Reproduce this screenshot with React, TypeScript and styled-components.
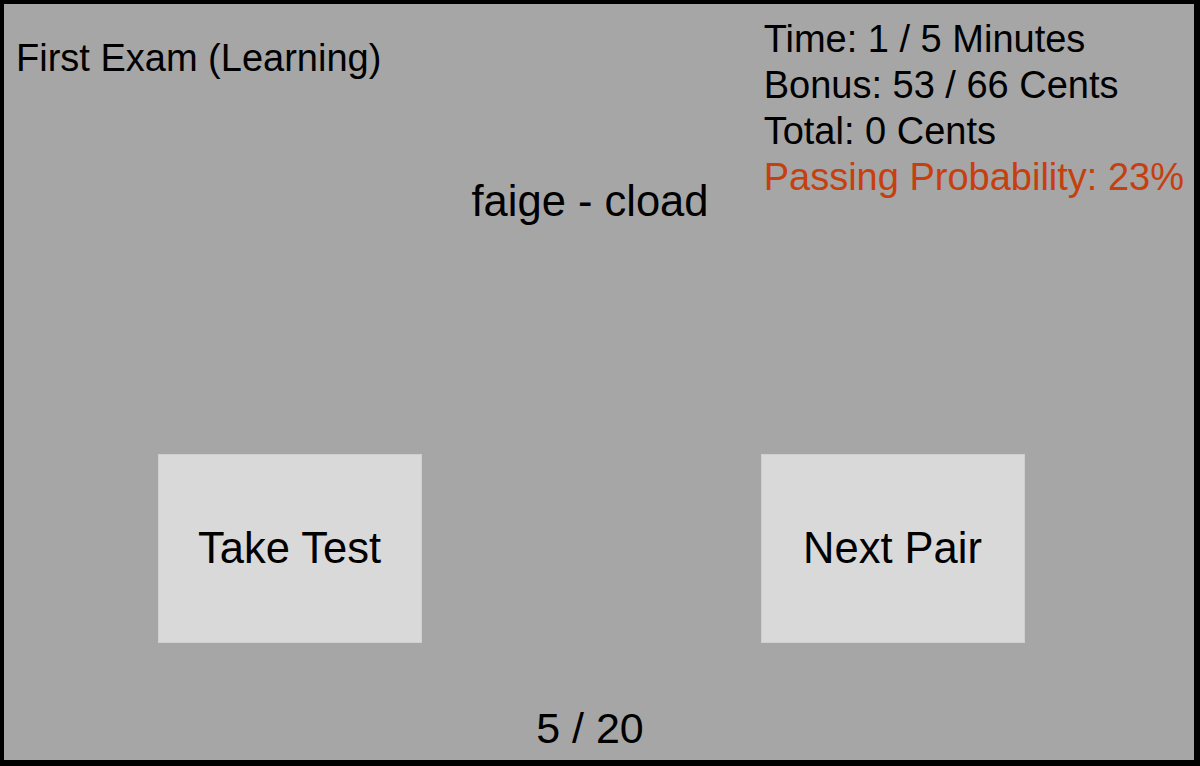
import React from "react";
import styled, { createGlobalStyle } from "styled-components";

const GlobalStyle = createGlobalStyle`
  html, body { margin: 0; padding: 0; background: #a6a6a6; }
  body { font-family: "Liberation Sans", Arial, sans-serif; }
  * { box-sizing: border-box; }
`;

const Frame = styled.div`
  width: 1200px;
  height: 766px;
  background: #a6a6a6;
  border-style: solid;
  border-color: #000;
  border-width: 4px 6px 6px 4px;
  display: flex;
  flex-direction: column;
  color: #000;
  font-family: "Liberation Sans", Arial, sans-serif;
`;

const Header = styled.div`
  display: grid;
  grid-template-columns: 1fr auto 1fr;
  grid-template-areas:
    "heading . stats"
    ". title stats";
  padding-right: 10px;
`;

const Heading = styled.h1`
  grid-area: heading;
  margin: 0;
  padding: 31px 0 0 12px;
  font-size: 38px;
  font-weight: 400;
  line-height: 46px;
  white-space: nowrap;
`;

const Stats = styled.div`
  grid-area: stats;
  justify-self: end;
  align-self: start;
  margin-top: 12px;
  display: flex;
  flex-direction: column;
`;

const StatLine = styled.div<{ $warn?: boolean }>`
  font-size: 38px;
  line-height: 46px;
  white-space: nowrap;
  color: ${(p) => (p.$warn ? "#c5400e" : "#000")};
`;

const PairTitle = styled.div`
  grid-area: title;
  margin: 96px 8px 0 0;
  font-size: 43.5px;
  line-height: 48px;
  white-space: nowrap;
`;

const ButtonRow = styled.div`
  margin-top: 229px;
  display: flex;
  justify-content: center;
  gap: 339px;
  padding-right: 16px;
`;

const ActionButton = styled.button`
  width: 264px;
  height: 189px;
  background: #d9d9d9;
  border: 1px solid #cfcfcf;
  border-radius: 0;
  font-family: "Liberation Sans", Arial, sans-serif;
  font-size: 43.5px;
  color: #000;
  padding: 0;
  display: flex;
  align-items: center;
  justify-content: center;
  cursor: pointer;
`;

const Counter = styled.div`
  margin-top: auto;
  padding: 0 18px 8px 0;
  text-align: center;
  font-size: 43px;
  line-height: 48px;
`;

export default function App() {
  return (
    <>
      <GlobalStyle />
      <Frame>
        <Header>
          <Heading>First Exam (Learning)</Heading>
          <Stats>
            <StatLine>Time: 1 / 5 Minutes</StatLine>
            <StatLine>Bonus: 53 / 66 Cents</StatLine>
            <StatLine>Total: 0 Cents</StatLine>
            <StatLine $warn>Passing Probability: 23%</StatLine>
          </Stats>
          <PairTitle>faige - cload</PairTitle>
        </Header>
        <ButtonRow>
          <ActionButton>Take Test</ActionButton>
          <ActionButton>Next Pair</ActionButton>
        </ButtonRow>
        <Counter>5 / 20</Counter>
      </Frame>
    </>
  );
}
